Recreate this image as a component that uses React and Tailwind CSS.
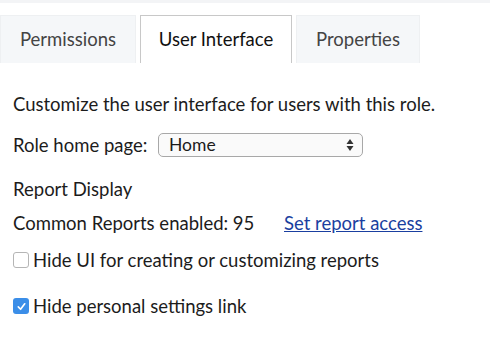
import React from "react";

function App() {
  return (
    <div
      className="h-[342px] w-[490px] overflow-hidden bg-white text-[#1c1c1c]"
      style={{ fontFamily: "Lato, 'Open Sans', sans-serif" }}
    >
      <div className="h-[3px] bg-[#f3f4f6]" />
      {/* Tabs */}
      <div className="mt-[12px] flex h-[48px] items-stretch gap-[4px]">
        <div className="flex w-[136px] items-center justify-center border border-b-0 border-[#eef0f2] bg-[#f5f7f9] text-[18.5px] text-[#444]">
          Permissions
        </div>
        <div className="flex w-[152px] items-center justify-center border border-b-0 border-[#c8c8c8] bg-white text-[18.5px] text-[#111]">
          User Interface
        </div>
        <div className="flex w-[124px] items-center justify-center border border-b-0 border-[#eef0f2] bg-[#f5f7f9] text-[18.5px] text-[#444]">
          Properties
        </div>
      </div>

      <div className="px-[13px] pt-[29px] text-[18.5px] leading-[24px]">
        <p>Customize the user interface for users with this role.</p>

        <div className="mt-[17px] flex items-center">
          <span className="w-[145px]">Role home page:</span>
          <div className="flex h-[24px] w-[205px] items-center justify-between rounded-[5px] border border-[#a8a8a8] bg-[#fafafa] pl-[10px] pr-[8px] text-[17.5px]">
            <span>Home</span>
            <svg width="8" height="14" viewBox="0 0 8 14">
              <path d="M4 1 L7.5 6 H0.5 Z" fill="#333" />
              <path d="M4 13 L7.5 8 H0.5 Z" fill="#333" />
            </svg>
          </div>
        </div>

        <p className="mt-[20px]">Report Display</p>

        <div className="mt-[10px] flex items-center">
          <span className="w-[247px]">Common Reports enabled: 95</span>
          <a href="#" className="ml-[24px] text-[#1a3fa0] underline">
            Set report access
          </a>
        </div>

        <label className="mt-[13px] flex items-center gap-[4px]">
          <span className="h-[16px] w-[16px] rounded-[3px] border border-[#b5b5b5] bg-white" />
          <span>Hide UI for creating or customizing reports</span>
        </label>

        <label className="mt-[22px] flex items-center gap-[4px]">
          <span className="flex h-[16px] w-[16px] items-center justify-center rounded-[3px] bg-[#3b8ee8]">
            <svg width="11" height="11" viewBox="0 0 12 12">
              <path d="M2.5 6.5 L5 9 L9.5 3" fill="none" stroke="white" strokeWidth="1.8" strokeLinecap="round" strokeLinejoin="round" />
            </svg>
          </span>
          <span>Hide personal settings link</span>
        </label>
      </div>
    </div>
  );
}

export default App;
